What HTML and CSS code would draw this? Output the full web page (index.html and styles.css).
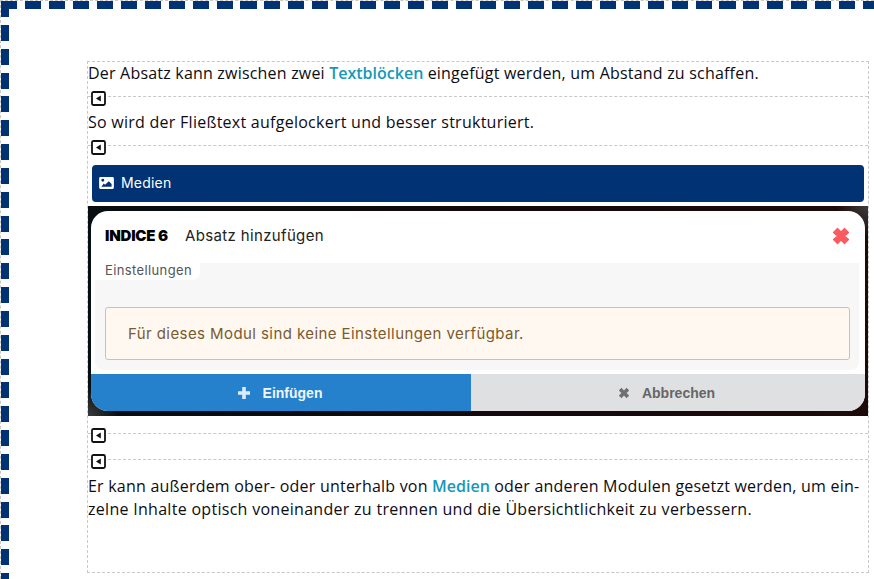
FILE: index.html
```html
<!DOCTYPE html>
<html lang="de">
<head>
<meta charset="utf-8">
<title>Absatz</title>
<link rel="stylesheet" href="styles.css">
</head>
<body>
<div class="outer">
  <div class="frame">
    <div class="content">
      <p class="text first"><span class="line-a">Der Absatz kann zwischen zwei <a class="link">Textblöcken</a> eingefügt werden, um Abstand zu schaffen.</span></p>
      <div class="sep"><span class="handle"><svg viewBox="0 0 15 15" width="15" height="15"><rect x="1" y="1" width="13" height="13" rx="1.500" fill="#fff" stroke="#111" stroke-width="1.800"/><path d="M9.800 4.600v6L5 7.600z" fill="#111"/></svg></span></div>
      <p class="text second"><span class="line-b">So wird der Fließtext aufgelockert und besser strukturiert.</span></p>
      <div class="sep"><span class="handle"><svg viewBox="0 0 15 15" width="15" height="15"><rect x="1" y="1" width="13" height="13" rx="1.500" fill="#fff" stroke="#111" stroke-width="1.800"/><path d="M9.800 4.600v6L5 7.600z" fill="#111"/></svg></span></div>
      <div class="media-bar">
        <svg class="media-icon" viewBox="0 0 16 13" width="15" height="12"><path fill="#fff" fill-rule="evenodd" d="M1.500 0h13A1.500 1.500 0 0 1 16 1.500v10a1.500 1.500 0 0 1-1.500 1.500h-13A1.500 1.500 0 0 1 0 11.500v-10A1.500 1.500 0 0 1 1.500 0zM4 2a1.600 1.600 0 1 0 0 3.200A1.600 1.600 0 0 0 4 2zM2.500 10.500h11V7.500L10.500 4.500 6.500 8.500 5 7z"/></svg>
        <span>Medien</span>
      </div>
      <div class="shot">
        <div class="modal">
          <div class="modal-head">
            <span class="brand">INDICE 6</span>
            <span class="modal-title">Absatz hinzufügen</span>
            <svg class="close" viewBox="0 0 18 18" width="18" height="18"><path d="M1.500 5.500l4-4 3.500 3.500 3.500-3.500 4 4L12.500 9l4 3.500-4 4L9 13l-3.500 3.500-4-4L5.500 9z" fill="#fb5a5f" stroke="#fb5a5f" stroke-width="1.200" stroke-linejoin="round"/></svg>
          </div>
          <div class="panel">
            <div class="tab">Einstellungen</div>
            <div class="notice">Für dieses Modul sind keine Einstellungen verfügbar.</div>
          </div>
          <div class="actions">
            <div class="btn btn-add">
              <svg viewBox="0 0 14 14" width="14" height="14"><path d="M5.200 1h3.600v4.200H13v3.600H8.800V13H5.200V8.800H1V5.200h4.200z" fill="#dcebf8"/></svg>
              <span>Einfügen</span>
            </div>
            <div class="btn btn-cancel">
              <svg viewBox="0 0 14 14" width="12" height="12"><path d="M1 4l3-3 3 3 3-3 3 3-3 3 3 3-3 3-3-3-3 3-3-3 3-3z" fill="#707070"/></svg>
              <span>Abbrechen</span>
            </div>
          </div>
        </div>
      </div>
      <div class="sep after-shot"><span class="handle"><svg viewBox="0 0 15 15" width="15" height="15"><rect x="1" y="1" width="13" height="13" rx="1.500" fill="#fff" stroke="#111" stroke-width="1.800"/><path d="M9.800 4.600v6L5 7.600z" fill="#111"/></svg></span></div>
      <div class="sep"><span class="handle"><svg viewBox="0 0 15 15" width="15" height="15"><rect x="1" y="1" width="13" height="13" rx="1.500" fill="#fff" stroke="#111" stroke-width="1.800"/><path d="M9.800 4.600v6L5 7.600z" fill="#111"/></svg></span></div>
      <p class="text last"><span class="line-c">Er kann außerdem ober- oder unterhalb von <a class="link">Medien</a> oder anderen Modulen gesetzt werden, um ein-</span><br><span class="line-d">zelne Inhalte optisch voneinander zu trennen und die Übersichtlichkeit zu verbessern.</span></p>
    </div>
  </div>
</div>
</body>
</html>
```
FILE: styles.css
```css
html, body {
  margin: 0;
  padding: 0;
  height: 579px;
  overflow: hidden;
  background: #fff;
}
body {
  font-family: "Open Sans", "Noto Sans", sans-serif;
  color: #111;
}
.outer {
  box-sizing: border-box;
  width: 874px;
  height: 579px;
  border-top: 1px dashed #c8c8c8;
  border-left: 1px dashed #c8c8c8;
}
.frame {
  box-sizing: border-box;
  height: 100%;
  padding: 60px 0 0 86px;
  background:
    repeating-linear-gradient(90deg, #003274 0 16px, transparent 16px 23.950px) left top / 100% 8px no-repeat,
    repeating-linear-gradient(180deg, #003274 0 16px, transparent 16px 23.840px) left top / 8px 100% no-repeat;
}
.content {
  width: 780px;
  height: 510px;
  border: 1px dashed #c8c8c8;
}
.text {
  margin: 0;
  font-size: 16px;
  line-height: 23.500px;
  color: #0c0c14;
}
.line-a { letter-spacing: 0.200px; }
.line-b { letter-spacing: 0.260px; }
.line-c { letter-spacing: 0.215px; }
.line-d { letter-spacing: 0.290px; }
.first { padding-bottom: 10px; }
.second { padding-bottom: 11px; }
.last { margin-top: 0.500px; }
.link {
  color: #1698b8;
  font-weight: 600;
  letter-spacing: 0;
}
.sep {
  position: relative;
  border-top: 1px dashed #c8c8c8;
  height: 14px;
}
.handle {
  position: absolute;
  left: 3px;
  top: -6px;
  width: 15px;
  height: 15px;
  line-height: 0;
}
.media-bar {
  display: flex;
  align-items: center;
  gap: 7px;
  height: 37px;
  margin: 5px 4px 4px;
  padding: 0 0 2px 7px;
  box-sizing: border-box;
  background: #003274;
  border-radius: 4px;
  color: #fff;
  font-family: "Inter", sans-serif;
  font-size: 14px;
  letter-spacing: 0.200px;
}
.shot {
  height: 210px;
  box-sizing: border-box;
  padding: 5px 3px;
  background:
    radial-gradient(circle at 100% 0, #3c3c3c 0, transparent 32px),
    radial-gradient(circle at 0 100%, #3a3a3a 0, transparent 30px),
    linear-gradient(90deg, #060e12 0%, #14090c 55%, #1e0a0a 100%);
}
.modal {
  display: flex;
  flex-direction: column;
  height: 100%;
  background: #fff;
  border-radius: 17px;
  overflow: hidden;
}
.modal-head {
  display: flex;
  align-items: center;
  box-sizing: border-box;
  height: 52px;
  padding: 0 15px 4px 14px;
  flex: none;
}
.brand {
  font-family: "Inter", sans-serif;
  font-weight: 900;
  font-size: 15px;
  letter-spacing: -0.200px;
  color: #000;
  width: 80px;
}
.modal-title {
  font-family: "Inter", sans-serif;
  font-size: 15px;
  letter-spacing: 0.350px;
  color: #222;
  flex: 1;
}
.close { margin-top: 1px; }
.panel {
  flex: 1;
  margin: 0 6px 4px 4px;
  background: #f7f7f7;
  border-radius: 0 0 8px 8px;
}
.tab {
  width: fit-content;
  font-family: "Inter", sans-serif;
  font-size: 13px;
  letter-spacing: 0.380px;
  line-height: 15px;
  height: 17px;
  color: #555;
  background: #fff;
  padding: 0 8px 0 10px;
  border-radius: 0 0 8px 0;
}
.notice {
  display: flex;
  align-items: center;
  box-sizing: border-box;
  height: 53px;
  margin: 27px 9px 0 10px;
  padding-left: 22px;
  background: #fef8f0;
  border: 1px solid #cdc3ac;
  border-radius: 3px;
  font-family: "Inter", sans-serif;
  font-size: 15px;
  letter-spacing: 0.420px;
  color: #7a5a2f;
}
.actions {
  display: flex;
  height: 37px;
  flex: none;
}
.btn {
  display: flex;
  align-items: center;
  justify-content: center;
  gap: 12px;
  padding-right: 3px;
  font-family: "Liberation Sans", Arial, sans-serif;
  font-size: 14px;
  font-weight: 700;
}
.btn-add {
  width: 377px;
  background: #2581cc;
  color: #eef6fc;
}
.btn-cancel {
  flex: 1;
  background: #dfe0e2;
  color: #666;
}
.after-shot {
  margin-top: 17px;
  height: 25px;
}
```
